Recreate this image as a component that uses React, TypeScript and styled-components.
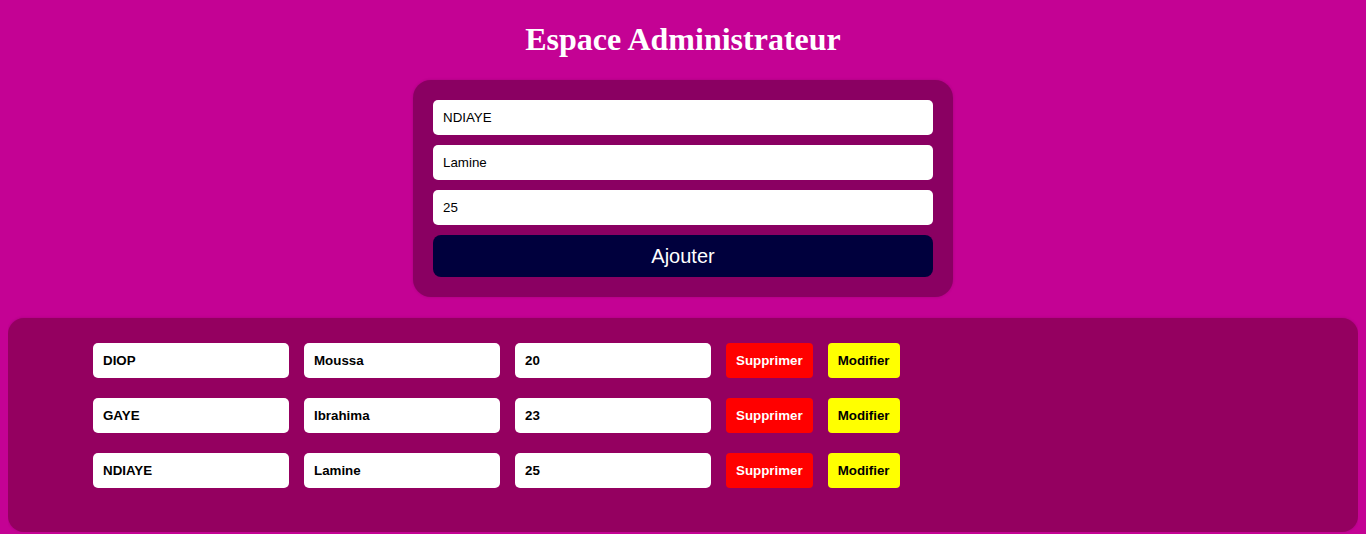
import React from "react";
import styled, { createGlobalStyle } from "styled-components";

const GlobalStyle = createGlobalStyle`
  html, body {
    background-color: #c40294;
  }
  body {
    margin: 8px;
    font-family: "Liberation Sans", Arial, sans-serif;
  }
`;

const Page = styled.div`
  display: flex;
  flex-direction: column;
  align-items: stretch;
`;

const Title = styled.h1`
  margin: 13px 0 22px;
  text-align: center;
  font-family: "Liberation Serif", "Times New Roman", serif;
  font-size: 32px;
  font-weight: bold;
  color: #ffffff;
`;

const Form = styled.form`
  align-self: center;
  width: 540px;
  box-sizing: border-box;
  padding: 20px;
  background-color: #8a0062;
  border-radius: 18px;
  display: flex;
  flex-direction: column;
  gap: 10px;
  box-shadow: 0 0 3px rgb(0 0 0 / 15%);
`;

const FormInput = styled.input`
  height: 35px;
  box-sizing: border-box;
  border: none;
  border-radius: 5px;
  padding: 0 10px;
  font-family: "Liberation Sans", Arial, sans-serif;
  font-size: 13.33px;
  color: #000;
  background: #fff;
  outline: none;
`;

const AddButton = styled.button`
  height: 42px;
  border: none;
  border-radius: 8px;
  background-color: #00003d;
  color: #fff;
  font-family: "Liberation Sans", Arial, sans-serif;
  font-size: 20px;
  cursor: pointer;
`;

const List = styled.div`
  margin-top: 21px;
  padding: 25px 85px 44px;
  background-color: #940060;
  border-radius: 16px;
  display: flex;
  flex-direction: column;
  gap: 20px;
  box-shadow: 0 0 3px rgb(0 0 0 / 15%);
`;

const Row = styled.div`
  display: flex;
  gap: 15px;
`;

const Cell = styled.input`
  width: 196px;
  height: 35px;
  box-sizing: border-box;
  border: none;
  border-radius: 5px;
  padding: 0 10px;
  font-family: "Liberation Sans", Arial, sans-serif;
  font-size: 13.33px;
  font-weight: bold;
  color: #000;
  background: #fff;
  outline: none;
`;

const ActionButton = styled.button<{ variant: "delete" | "edit" }>`
  height: 35px;
  border: none;
  border-radius: 4px;
  padding: 0 10px;
  font-family: "Liberation Sans", Arial, sans-serif;
  font-size: 13.33px;
  font-weight: bold;
  cursor: pointer;
  background-color: ${(p) => (p.variant === "delete" ? "#ff0000" : "#ffff00")};
  color: ${(p) => (p.variant === "delete" ? "#ffffff" : "#000000")};
`;

const people = [
  { nom: "DIOP", prenom: "Moussa", age: "20" },
  { nom: "GAYE", prenom: "Ibrahima", age: "23" },
  { nom: "NDIAYE", prenom: "Lamine", age: "25" },
];

const App: React.FC = () => {
  return (
    <Page>
      <GlobalStyle />
      <Title>Espace Administrateur</Title>
      <Form onSubmit={(e) => e.preventDefault()}>
        <FormInput defaultValue="NDIAYE" />
        <FormInput defaultValue="Lamine" />
        <FormInput defaultValue="25" />
        <AddButton type="submit">Ajouter</AddButton>
      </Form>
      <List>
        {people.map((p) => (
          <Row key={p.nom}>
            <Cell defaultValue={p.nom} />
            <Cell defaultValue={p.prenom} />
            <Cell defaultValue={p.age} />
            <ActionButton variant="delete">Supprimer</ActionButton>
            <ActionButton variant="edit">Modifier</ActionButton>
          </Row>
        ))}
      </List>
    </Page>
  );
};

export default App;
